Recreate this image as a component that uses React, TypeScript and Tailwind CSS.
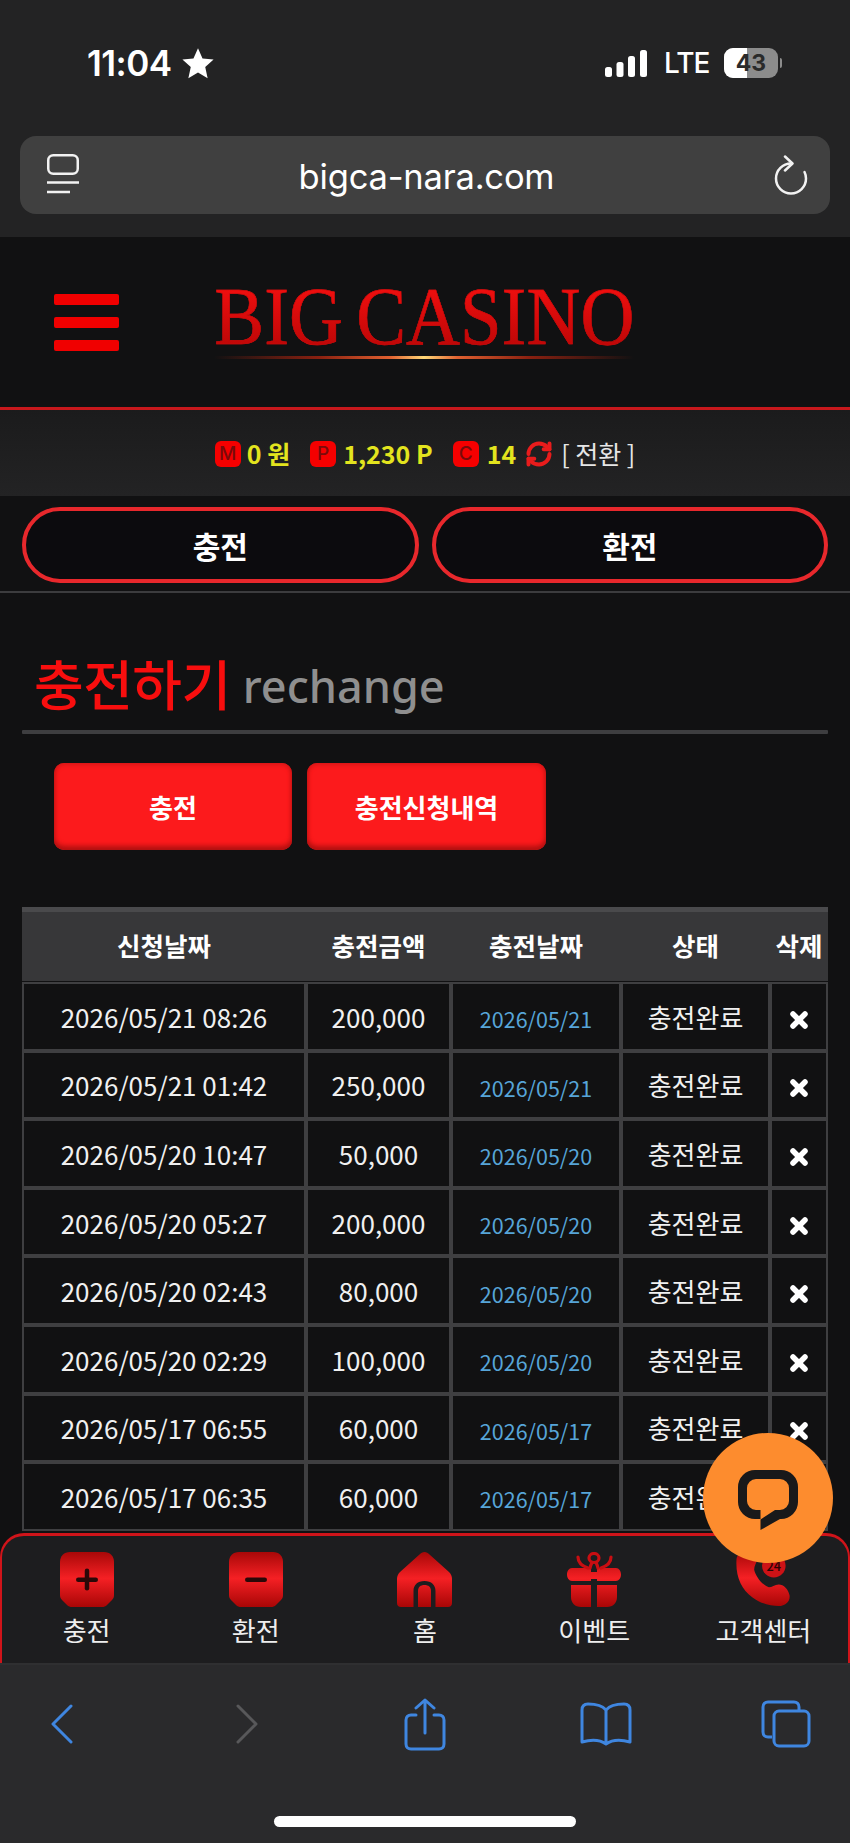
import { RefreshCw, X } from "lucide-react";

const rows = [
  ["2026/05/21 08:26", "200,000", "2026/05/21"],
  ["2026/05/21 01:42", "250,000", "2026/05/21"],
  ["2026/05/20 10:47", "50,000", "2026/05/20"],
  ["2026/05/20 05:27", "200,000", "2026/05/20"],
  ["2026/05/20 02:43", "80,000", "2026/05/20"],
  ["2026/05/20 02:29", "100,000", "2026/05/20"],
  ["2026/05/17 06:55", "60,000", "2026/05/17"],
  ["2026/05/17 06:35", "60,000", "2026/05/17"],
];

const columns = "grid grid-cols-[284px_145px_170px_149px_58px]";
const cell = "flex items-center justify-center border-2 border-[#3f3f41] bg-[#111112]";

function RedDefs() {
  return (
    <svg width="0" height="0" className="absolute">
      <defs>
        <linearGradient id="navRed" gradientUnits="userSpaceOnUse" x1="0" y1="0" x2="0" y2="55">
          <stop offset="0" stopColor="#a80808" />
          <stop offset="0.48" stopColor="#f52024" />
          <stop offset="1" stopColor="#a80606" />
        </linearGradient>
      </defs>
    </svg>
  );
}

function StatusBar() {
  return (
    <div className="flex h-[126px] items-center pl-[87px] pr-[68px] font-['Inter',sans-serif] text-white">
      <span className="text-[35px] font-semibold tracking-[-0.5px]">11:04</span>
      <svg viewBox="0 0 24 24" className="ml-[9px] h-[34px] w-[34px] fill-white">
        <path d="M12 1.5l3.2 7.3 7.8.8-5.9 5.3 1.7 7.8-6.800-4-6.800 4 1.700-7.800L1 9.600l7.800-.8z" />
      </svg>
      <svg viewBox="0 0 42 27" className="ml-auto h-[27px] w-[42px] fill-white">
        <rect x="0" y="17" width="7" height="10" rx="2.5" />
        <rect x="11.5" y="12" width="7" height="15" rx="2.5" />
        <rect x="23" y="6" width="7" height="21" rx="2.5" />
        <rect x="35" y="0" width="7" height="27" rx="2.5" />
      </svg>
      <span className="ml-[17px] w-[43px] text-[28px] font-medium leading-none tracking-[-1px]">LTE</span>
      <div className="relative ml-[17px] h-[30px] w-[54px] overflow-hidden rounded-[9px] bg-[#8c8c8c]">
        <div className="h-full w-[23px] bg-white" />
        <span className="absolute inset-0 flex items-center justify-center text-[23px] font-bold text-[#2a2a2a]">
          43
        </span>
      </div>
      <div className="ml-[2px] h-[10px] w-[2px] rounded-r bg-[#8c8c8c]" />
    </div>
  );
}

function UrlBar() {
  return (
    <div className="mx-[20px] flex h-[78px] items-center rounded-[16px] bg-[#404040] pl-[27px] pr-[22px]">
      <svg viewBox="0 0 32 42" className="h-[42px] w-[32px]" fill="none" stroke="#f2f2f2" strokeWidth="2.500">
        <rect x="1.250" y="1.250" width="29.500" height="18.500" rx="5" />
        <path d="M0 28.500h32M0 38h23" />
      </svg>
      <span className="flex-1 pt-[3px] text-center font-['Inter',sans-serif] text-[34.500px] font-normal tracking-[-0.2px] text-white">
        bigca-nara.com
      </span>
      <svg viewBox="0 0 34 40" className="h-[40px] w-[34px]" fill="none" stroke="#f2f2f2" strokeWidth="2.500" strokeLinecap="round" strokeLinejoin="round">
        <path d="M17 8.500a15 15 0 1 0 15 15c0-2.500-.5-4.500-1.500-6.500" />
        <path d="M11 1.500l7.500 7-7.500 7" />
      </svg>
    </div>
  );
}

function Header() {
  return (
    <header className="flex h-[173px] items-center border-b-[3px] border-[#c8181c] bg-[#111112] pl-[54px]">
      <div className="flex w-[65px] flex-col gap-[12px]">
        <div className="h-[11px] rounded-[2px] bg-[#f00000]" />
        <div className="h-[11px] rounded-[2px] bg-[#f00000]" />
        <div className="h-[11px] rounded-[2px] bg-[#f00000]" />
      </div>
      <div className="ml-[95px] flex w-[420px] flex-col items-center pb-[7px]">
        <span className="scale-x-[0.9] whitespace-nowrap bg-linear-to-b from-[#f81010] to-[#b80606] bg-clip-text font-['Liberation_Serif',serif] text-[83px] leading-[76px] text-transparent [word-spacing:-6px] [-webkit-text-stroke:0.5px_#d00c0c]">
          BIG CASINO
        </span>
        <div className="mt-[2px] h-[3px] w-full bg-[linear-gradient(90deg,transparent,#8a2010_25%,#e06030_42%,#ffd878_50%,#e06030_58%,#8a2010_75%,transparent)]" />
      </div>
    </header>
  );
}

function PointBadge({ letter }: { letter: string }) {
  return (
    <span className="flex h-[26px] w-[26px] items-center justify-center rounded-[6px] bg-[#f50000] font-['Inter',sans-serif] text-[19px] font-medium text-[#7a0a0a]">
      {letter}
    </span>
  );
}

function PointsBar() {
  return (
    <div className="flex h-[86px] items-center justify-center bg-linear-to-b from-[#1b1b1c] to-[#232324] pt-[2px] text-[25px] font-bold text-[#e3e41e]">
      <PointBadge letter="M" />
      <span className="ml-[6px]">0 원</span>
      <span className="ml-[20px]"><PointBadge letter="P" /></span>
      <span className="ml-[7px]">1,230 P</span>
      <span className="ml-[20px]"><PointBadge letter="C" /></span>
      <span className="ml-[8px]">14</span>
      <RefreshCw className="ml-[9px] h-[28px] w-[28px] text-[#e81c1c]" strokeWidth={3.4} />
      <span className="ml-[8px] text-[25px] font-normal text-[#e6e6e6]">[ 전환 ]</span>
    </div>
  );
}

function TabButtons() {
  return (
    <div className="grid h-[97px] grid-cols-2 gap-[13px] border-b-2 border-[#3c3c3e] bg-[#111112] px-[22px] pt-[11px]">
      <button className="h-[76px] rounded-[38px] border-[4px] border-[#e8282c] bg-[#0c0b0e] text-[30px] font-bold text-white">
        충전
      </button>
      <button className="h-[76px] rounded-[38px] border-[4px] border-[#e8282c] bg-[#0c0b0e] text-[30px] font-bold text-white">
        환전
      </button>
    </div>
  );
}

function ChargeHistory() {
  return (
    <section className="bg-[#111112] px-[22px] pt-[54px]">
      <h2 className="flex h-[72px] items-center gap-[12px] pl-[12px]">
        <span className="text-[54px] font-medium leading-none tracking-[-0.5px] text-[#f80e0e]">충전하기</span>
        <span className="pt-[5px] font-['Noto_Sans',sans-serif] text-[45px] font-medium leading-none text-[#8f8f8f]">
          rechange
        </span>
      </h2>
      <div className="mt-[11px] h-[4px] rounded-[1px] bg-[#3e3e40]" />
      <div className="mt-[29px] flex gap-[15px] pl-[32px]">
        <button className="h-[87px] w-[238px] rounded-[10px] bg-[#fc1a1c] text-[26px] font-bold text-white shadow-[inset_0_-4px_5px_#b01010,inset_0_2px_4px_#d81818]">
          충전
        </button>
        <button className="h-[87px] w-[239px] rounded-[10px] bg-[#fc1a1c] text-[26px] font-bold text-white shadow-[inset_0_-4px_5px_#b01010,inset_0_2px_4px_#d81818]">
          충전신청내역
        </button>
      </div>

      <div className={`${columns} mt-[57px] h-[74px] items-center border-t-[5px] border-[#4a4a4c] bg-[#373739] pb-[2px] text-center text-[25.500px] font-bold text-white`}>
        <span>신청날짜</span>
        <span>충전금액</span>
        <span>충전날짜</span>
        <span>상태</span>
        <span>삭제</span>
      </div>
      <div className="mt-[1px]">
        {rows.map(([requested, amount, charged]) => (
          <div key={requested} className={`${columns} h-[68.6px] text-[#f0f0f0]`}>
            <div className={`${cell} text-[26px]`}>{requested}</div>
            <div className={`${cell} text-[26px]`}>{amount}</div>
            <div className={`${cell} pt-[6px] text-[21.500px] text-[#57a5d8]`}>{charged}</div>
            <div className={`${cell} text-[26px]`}>충전완료</div>
            <div className={`${cell} pt-[7px]`}>
              <X className="h-[24px] w-[24px] text-white" strokeWidth={5.5} />
            </div>
          </div>
        ))}
      </div>
    </section>
  );
}

function NavIcon({ name }: { name: string }) {
  if (name === "plus" || name === "minus") {
    return (
      <svg viewBox="0 0 54 55" className="h-[55px] w-[54px]">
        <path d="M10 0h34c6 0 10 4 10 10v33c0 2-.5 3.500-2 5l-5 5c-1.500 1.500-3 2-5 2H12c-2 0-3.500-.5-5-2l-5-5c-1.500-1.500-2-3-2-5V10C0 4 4 0 10 0z" fill="url(#navRed)" />
        <rect x="16" y="25.500" width="22" height="4.500" rx="2.250" fill="#2a0808" />
        {name === "plus" && <rect x="24.750" y="16.500" width="4.500" height="22" rx="2.250" fill="#2a0808" />}
      </svg>
    );
  }
  if (name === "home") {
    return (
      <svg viewBox="0 0 55 55" className="h-[55px] w-[55px]">
        <path
          fillRule="evenodd"
          d="M27.500 0c2 0 3.500 1 5 2.500L52 20c2 2 3 4 3 7v24c0 2.500-1.500 4-4 4H38.500V39c0-6-4-10-11-10s-11 4-11 10v16H4c-2.500 0-4-1.500-4-4V27c0-3 1-5 3-7L22.500 2.500C24 1 25.500 0 27.500 0z"
          fill="url(#navRed)"
        />
        <path d="M21 55V39c0-4 2.500-6 6.500-6s6.500 2 6.500 6v16z" fill="url(#navRed)" />
      </svg>
    );
  }
  if (name === "gift") {
    return (
      <svg viewBox="0 0 54 55" className="h-[55px] w-[54px]">
        <g fill="url(#navRed)">
          <path d="M5 16h19v4h6v-4h19c3 0 5 3 5 6.500S52 29 49 29H30v-2h-6v2H5c-3 0-5-3-5-6.500S2 16 5 16z" />
          <path d="M4 33h20v22H14c-6 0-10-4-10-10zM30 33h20v12c0 6-4 10-10 10H30z" />
        </g>
        <g fill="none" stroke="#c80e12" strokeWidth="3.200" strokeLinecap="round">
          <ellipse cx="27" cy="6" rx="5" ry="4.500" />
          <path d="M25 10.500c-1 2-1.500 3.500-2 5.500M29 10.500c1 2 1.500 3.500 2 5.500" />
          <path d="M11 5c0 5 4 9 10 11M44 5c0 5-4 9-10 11" />
        </g>
      </svg>
    );
  }
  return (
    <svg viewBox="0 0 56 56" className="h-[55px] w-[56px]">
      <path
        d="M1 8C0 25 6 38 17 46c9 7 19 9 27 9 7 0 12-5 11-11-1-6-6-11-11-11-4 0-7 3-10 3-6-2-13-10-15-18 0-4 2-6 3-10C23 2 15-1 8 0 4 1 1 4 1 8z"
        fill="url(#navRed)"
      />
      <circle cx="39" cy="14" r="12" fill="#cc1216" />
      <text x="39" y="19" textAnchor="middle" fontSize="13" fontWeight="500" fill="#2a0404">24</text>
    </svg>
  );
}

const navItems = [
  { icon: "plus", label: "충전" },
  { icon: "minus", label: "환전" },
  { icon: "home", label: "홈" },
  { icon: "gift", label: "이벤트" },
  { icon: "phone", label: "고객센터" },
];

function BottomNav() {
  return (
    <nav className="absolute inset-x-0 top-[1533px] grid h-[130px] grid-cols-5 rounded-t-[24px] border-x-2 border-t-[3px] border-[#d0141a] bg-[#1d1d1f] pt-[16px]">
      {navItems.map(({ icon, label }) => (
        <div key={label} className="flex flex-col items-center">
          <NavIcon name={icon} />
          <span className="mt-[4px] text-[26px] leading-[38px] text-[#eeeeee]">{label}</span>
        </div>
      ))}
    </nav>
  );
}

function ChatButton() {
  return (
    <div className="absolute left-[703px] top-[1433px] flex h-[130px] w-[130px] items-center justify-center rounded-full bg-[#fd8c2e]">
      <svg viewBox="0 0 60 60" className="mt-[4px] h-[60px] w-[60px]">
        <path
          fillRule="evenodd"
          d="M17 0h26a17 17 0 0 1 17 17v15a17 17 0 0 1-17 17h-1L22.500 60V49H17A17 17 0 0 1 0 32V17A17 17 0 0 1 17 0zM18 9a9 9 0 0 0-9 9v13a9 9 0 0 0 9 9h4.500v9.500L37 40h5a9 9 0 0 0 9-9V18a9 9 0 0 0-9-9z"
          fill="#19191a"
        />
      </svg>
    </div>
  );
}

function SafariToolbar() {
  return (
    <div className="relative flex h-[180px] items-start border-t-2 border-[#2f2f31] bg-[#2a2a2c] pl-[51px] pt-[33px]">
      <svg viewBox="0 0 22 40" className="mt-[6px] h-[40px] w-[22px]" fill="none" stroke="#3f86e0" strokeWidth="3" strokeLinecap="round" strokeLinejoin="round">
        <path d="M20 2L2 20l18 18" />
      </svg>
      <svg viewBox="0 0 22 40" className="ml-[163px] mt-[6px] h-[40px] w-[22px]" fill="none" stroke="#58585a" strokeWidth="3" strokeLinecap="round" strokeLinejoin="round">
        <path d="M2 2l18 18L2 38" />
      </svg>
      <svg viewBox="0 0 42 53" className="ml-[146px] h-[53px] w-[42px]" fill="none" stroke="#3f86e0" strokeWidth="3" strokeLinecap="round" strokeLinejoin="round">
        <path d="M12 17H7c-3 0-5 2-5 5v24c0 3 2 5 5 5h28c3 0 5-2 5-5V22c0-3-2-5-5-5h-5" />
        <path d="M21 35V2M12 10l9-8 9 8" />
      </svg>
      <svg viewBox="0 0 52 44" className="ml-[134px] mt-[4px] h-[44px] w-[52px]" fill="none" stroke="#3f86e0" strokeWidth="3" strokeLinecap="round" strokeLinejoin="round">
        <path d="M26 8C22 3 16 2 8 2 4 2 2 4 2 8v32c7-2 17-3 24 2 7-5 17-4 24-2V8c0-4-2-6-6-6-8 0-14 1-18 6zM26 8v33" />
      </svg>
      <svg viewBox="0 0 50 48" className="ml-[129px] mt-[2px] h-[48px] w-[50px]" fill="none" stroke="#3f86e0" strokeWidth="3" strokeLinejoin="round">
        <path d="M11 37H7c-3 0-5-2-5-5V7c0-3 2-5 5-5h26c3 0 5 2 5 5v4" />
        <rect x="13" y="11" width="35" height="35" rx="5" />
      </svg>
      <div className="absolute left-[274px] top-[151px] h-[11px] w-[302px] rounded-full bg-white" />
    </div>
  );
}

export default function App() {
  return (
    <div className="relative flex h-[1843px] w-[850px] flex-col overflow-hidden bg-[#111112] font-['Noto_Sans_CJK_KR','Noto_Sans',sans-serif]">
      <RedDefs />
      <div className="h-[237px] shrink-0 bg-[#232324]">
        <StatusBar />
        <div className="mt-[10px]">
          <UrlBar />
        </div>
      </div>
      <div className="min-h-0 flex-1 overflow-hidden">
        <Header />
        <PointsBar />
        <TabButtons />
        <ChargeHistory />
      </div>
      <BottomNav />
      <ChatButton />
      <SafariToolbar />
    </div>
  );
}
